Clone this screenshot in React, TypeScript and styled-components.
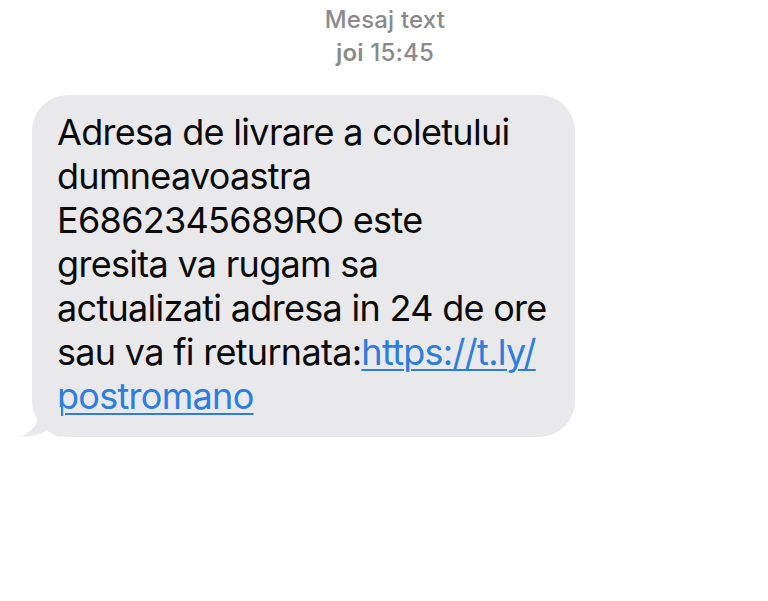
import * as React from "react";
import styled, { createGlobalStyle } from "styled-components";

const GlobalStyle = createGlobalStyle`
  html, body {
    margin: 0;
    padding: 0;
    background: #ffffff;
  }
  body {
    font-family: Inter, "Noto Sans", "Liberation Sans", sans-serif;
    -webkit-font-smoothing: antialiased;
  }
`;

const Screen = styled.div`
  display: flex;
  flex-direction: column;
  width: 768px;
  height: 601px;
  background: #ffffff;
  overflow: hidden;
`;

const Header = styled.header`
  display: flex;
  flex-direction: column;
  align-items: center;
  padding: 2.5px 0 0 2px;
  color: #8a8a8e;
  font-size: 24px;
  font-weight: 500;
  line-height: 33px;
  letter-spacing: 0.2px;
`;

const Strong = styled.span`
  font-weight: 600;
`;

const Thread = styled.div`
  display: flex;
  flex-direction: column;
  align-items: flex-start;
  padding: 26px 0 0 32px;
`;

const Bubble = styled.div`
  position: relative;
  box-sizing: border-box;
  width: 543px;
  padding: 15px 20px 19px 25px;
  background: #e9e9eb;
  border-radius: 36px;
  color: #0a0a0a;
  font-size: 36px;
  line-height: 44px;
  letter-spacing: -0.7px;
  white-space: nowrap;
`;

const Tail = styled.svg`
  position: absolute;
  left: -11px;
  bottom: 0;
  width: 40px;
  height: 30px;
`;

const Link = styled.a`
  color: #2b7de0;
  text-decoration: underline;
  text-decoration-thickness: 2px;
  text-underline-offset: 4px;
`;

type MessageProps = {
  lines: React.ReactNode[];
};

const Message = ({ lines }: MessageProps) => (
  <Bubble>
    <Tail viewBox="0 0 40 30">
      <path
        d="M18 0 C18 14 15 23 0 29.5 C10 30 19 28 26 23 C30 27 36 30 40 30 L40 0 Z"
        fill="#e9e9eb"
      />
    </Tail>
    {lines.map((line, i) => (
      <React.Fragment key={i}>
        {line}
        {i < lines.length - 1 && <br />}
      </React.Fragment>
    ))}
  </Bubble>
);

export default function App() {
  return (
    <>
      <GlobalStyle />
      <Screen>
        <Header>
          <span>Mesaj text</span>
          <span>
            <Strong>joi</Strong> 15:45
          </span>
        </Header>
        <Thread>
          <Message
            lines={[
              "Adresa de livrare a coletului",
              "dumneavoastra",
              "E6862345689RO este",
              "gresita va rugam sa",
              "actualizati adresa in 24 de ore",
              <>
                sau va fi returnata:<Link href="#">https://t.ly/</Link>
              </>,
              <Link href="#">postromano</Link>,
            ]}
          />
        </Thread>
      </Screen>
    </>
  );
}
